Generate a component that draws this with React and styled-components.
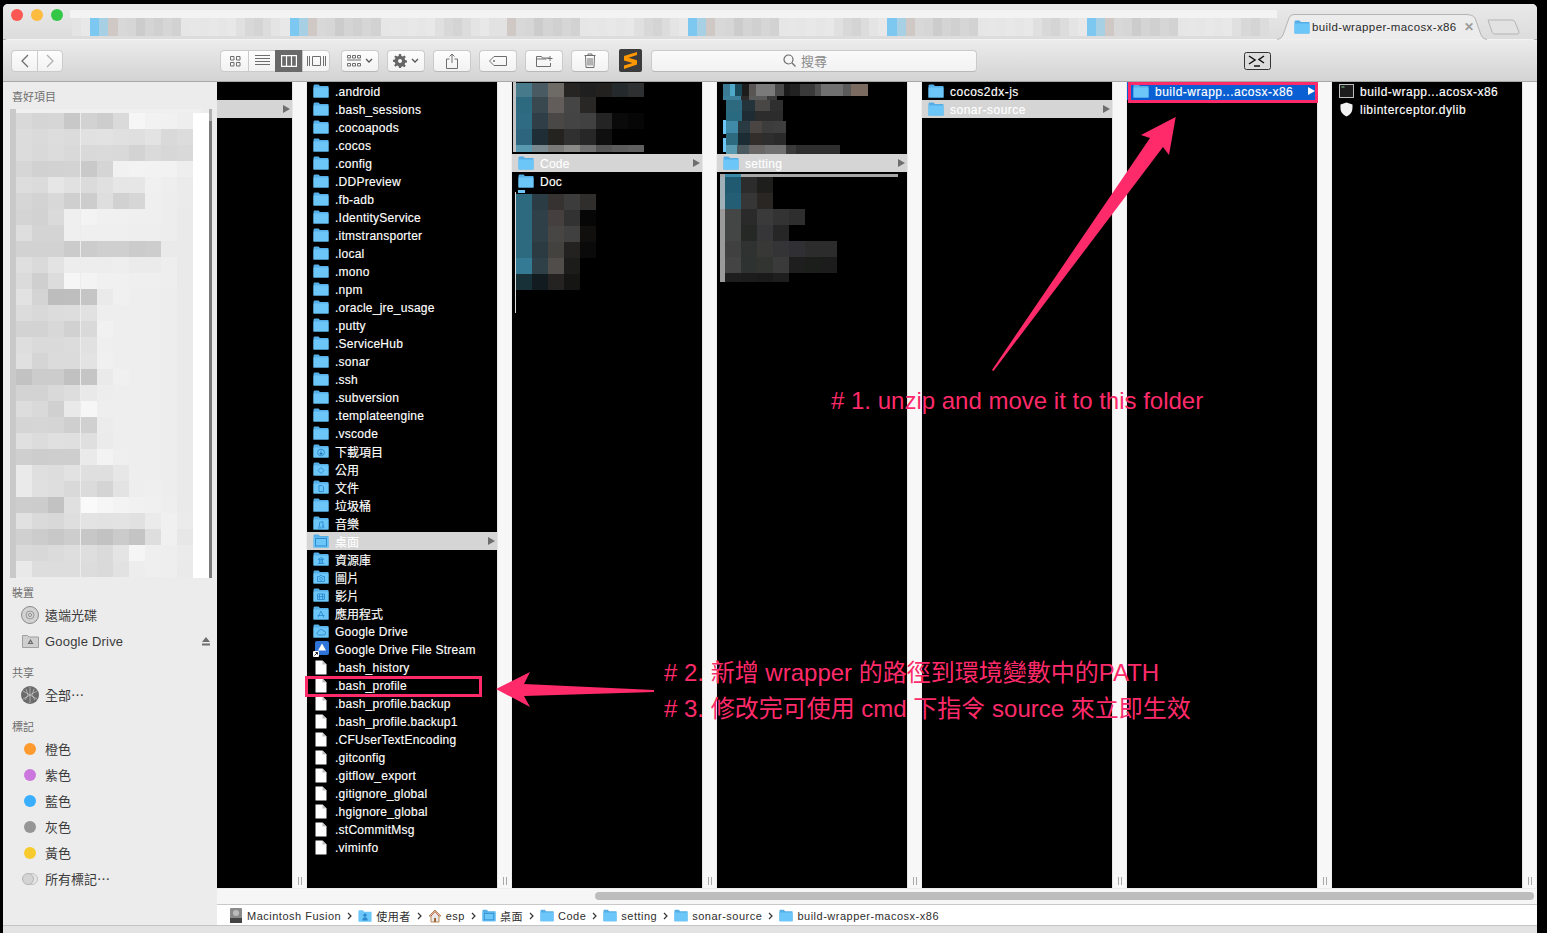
import React from 'react'
import styled, { createGlobalStyle } from 'styled-components'

const PINK = '#ff2a6a'
const SANS = `"Liberation Sans", "Noto Sans CJK TC", sans-serif`
const isCjk = s => /[\u3400-\u9fff]/.test(s)

const Global = createGlobalStyle`
  html, body { margin: 0; padding: 0; background: #000; overflow: hidden; }
  body { font-family: ${SANS}; }
`

const Page = styled.div`
  position: relative;
  width: 1547px;
  height: 933px;
  background: #000;
  padding: 4px 10px 0 3px;
  box-sizing: border-box;
  overflow: hidden;
`
const Win = styled.div`
  width: 1534px;
  height: 929px;
  display: flex;
  flex-direction: column;
  border-radius: 5px 5px 0 0;
  overflow: hidden;
  background: #ececec;
`

/* ---- tab strip ---- */
const TabBar = styled.div`
  height: 36px;
  flex: none;
  display: flex;
  box-sizing: border-box;
  border-bottom: 1px solid #a9a9a9;
  background: linear-gradient(#e9e9e9, #dcdcdc);
`
const Lights = styled.div`
  width: 67px;
  flex: none;
  display: flex;
  gap: 8px;
  padding: 5px 0 0 8px;
  box-sizing: border-box;
`
const Light = styled.span`
  width: 12px;
  height: 12px;
  border-radius: 50%;
  background: ${p => p.$c};
`
const BlurTabs = styled.div`
  width: 1207px;
  flex: none;
  margin-top: 6px;
  height: 26px;
`
const ActiveTab = styled.div`
  position: relative;
  width: 210px;
  height: 36px;
  flex: none;
  display: flex;
  align-items: center;
  padding: 10px 0 0 17px;
  box-sizing: border-box;
  font-size: 11.5px;
  letter-spacing: .38px;
  color: #2a2a2a;
  gap: 2px;
  & > span { position: relative; }
  & > svg:not(:first-child) { position: relative; }
`
const TabShape = styled.svg`
  position: absolute;
  left: 0;
  top: 0;
`
const TabClose = styled.span`
  margin-left: 5px;
  color: #9a9a9a;
  font-size: 12px;
  font-weight: bold;
`
const NewTab = styled.div`
  margin: 15px 0 0 0;
  flex: none;
  line-height: 0;
`

/* ---- toolbar ---- */
const Toolbar = styled.div`
  height: 43px;
  flex: none;
  display: flex;
  align-items: center;
  box-sizing: border-box;
  padding: 0 0 0 8px;
  background: linear-gradient(#ececec, #d3d3d3);
  border-top: 1px solid #f3f3f3;
  border-bottom: 1px solid #a8a8a8;
  border-radius: 5px 5px 0 0;
  margin-top: -1px;
`
const Btn = styled.button`
  height: 22px;
  width: ${p => p.$w || 38}px;
  margin-left: ${p => p.$ml || 0}px;
  flex: none;
  padding: 0;
  display: flex;
  align-items: center;
  justify-content: center;
  gap: 4px;
  border: 1px solid #cbcbcb;
  border-bottom-color: #b9b9b9;
  border-radius: 4px;
  background: linear-gradient(#fdfdfd, #f2f2f2);
`
const Seg = styled(Btn)`
  border-radius: ${p => p.$r || 0};
  margin-left: ${p => p.$ml ?? -1}px;
  background: ${p => p.$on ? '#696969' : 'linear-gradient(#fdfdfd, #f2f2f2)'};
  border-color: ${p => p.$on ? '#696969' : '#cbcbcb'};
`
const SublimeBox = styled.div`
  width: 23px;
  height: 23px;
  margin-left: 10px;
  flex: none;
  border-radius: 2px;
  background: #3b3b3b;
  line-height: 0;
`
const Search = styled.div`
  width: 326px;
  height: 22px;
  margin-left: 9px;
  flex: none;
  display: flex;
  align-items: center;
  justify-content: center;
  gap: 5px;
  box-sizing: border-box;
  padding-right: 18px;
  border: 1px solid #cbcbcb;
  border-bottom-color: #b9b9b9;
  border-radius: 4px;
  background: linear-gradient(#fafafa, #f2f2f2);
  font-size: 13px;
  color: #8a8a8a;
`
const TermBtn = styled.div`
  margin-left: 267px;
  width: 27px;
  height: 18px;
  flex: none;
  line-height: 0;
`

/* ---- body ---- */
const Body = styled.div`
  flex: 1;
  min-height: 0;
  display: flex;
`
const Sidebar = styled.div`
  width: 214px;
  flex: none;
  height: 844px;
  padding-top: 6px;
  box-sizing: border-box;
  background: #ececec;
`
const SideLabel = styled.div`
  height: 16px;
  line-height: 18px;
  padding-left: 9px;
  margin: ${p => p.$mt || 0}px 0 ${p => p.$mb ?? 2}px;
  font-size: 11px;
  color: #6f6f6f;
`
const SideBlur = styled.div`
  margin: 5px 0 6px 7px;
  height: 469px;
  line-height: 0;
`
const SideRow = styled.div`
  height: 26px;
  display: flex;
  align-items: center;
  padding-left: 15px;
  font-size: 13px;
  color: #3b3b3b;
`
const SideText = styled.span`
  margin-top: ${p => p.$cjk ? -2 : 0}px;
  letter-spacing: ${p => p.$cjk ? 0 : .2}px;
`
const SideIcon = styled.span`
  width: 24px;
  margin-right: 3px;
  flex: none;
  display: flex;
  justify-content: center;
`
const Dot = styled.span`
  width: 12px;
  height: 12px;
  border-radius: 50%;
  background: ${p => p.$c};
`
const Eject = styled.span`
  margin-left: auto;
  margin-right: 7px;
  line-height: 0;
`
const Main = styled.div`
  flex: 1;
  min-width: 0;
  display: flex;
  flex-direction: column;
`
const Columns = styled.div`
  height: 806px;
  flex: none;
  display: flex;
`
const Col = styled.div`
  width: ${p => p.$w || 190}px;
  flex: none;
  background: #000;
  overflow: hidden;
`
const Handle = styled.div`
  width: 15px;
  flex: none;
  box-sizing: border-box;
  background: #f7f7f7;
  border-left: 1px solid #e6e6e6;
  border-right: 1px solid #ededed;
  display: flex;
  align-items: flex-end;
  justify-content: center;
  gap: 2px;
  padding-bottom: 3px;
  & > i { width: 1px; height: 8px; background: #a8a8a8; }
`
const Row = styled.div`
  height: 18px;
  display: flex;
  align-items: center;
  gap: 6px;
  padding-left: 6px;
  padding-right: 2px;
  box-sizing: border-box;
  font-size: 12px;
  white-space: nowrap;
  color: #fff;
  background: ${p => p.$sel === 'blue' ? '#0a5fd2' : p.$sel ? '#d5d5d5' : 'transparent'};
`
const RowLabel = styled.span`
  padding-top: ${p => p.$cjk ? 0 : 2}px;
  letter-spacing: ${p => p.$cjk ? 0 : p.$wide ? .5 : .25}px;
  -webkit-text-stroke: .15px currentColor;
`
const RowIcon = styled.span`
  width: 16px;
  height: 16px;
  flex: none;
  display: flex;
  align-items: center;
  justify-content: center;
`
const RowArrow = styled.span`
  margin-left: auto;
  width: 0;
  height: 0;
  border-style: solid;
  border-width: 4px 0 4px 7px;
  border-color: transparent transparent transparent ${p => p.$c || '#6e6e6e'};
`
const BlurBlock = styled.div`
  height: ${p => p.$h}px;
  line-height: 0;
`
const Scroller = styled.div`
  height: 17px;
  flex: none;
  box-sizing: border-box;
  background: #f6f6f6;
  border-top: 1px solid #ececec;
  border-bottom: 1px solid #c9c9c9;
  padding: 3px 3px 0 378px;
  & > div { height: 8px; border-radius: 4px; background: #bdbdbd; }
`
const PathBar = styled.div`
  height: 21px;
  flex: none;
  display: flex;
  align-items: center;
  padding-left: 12px;
  background: #fff;
  font-size: 11px;
  letter-spacing: .5px;
  color: #2e2e2e;
  white-space: nowrap;
`
const Crumb = styled.span`
  display: flex;
  align-items: center;
  gap: 4px;
`
const Chev = styled.span`
  width: 17px;
  flex: none;
  display: flex;
  justify-content: center;
  line-height: 0;
`
const Status = styled.div`
  height: 8px;
  flex: none;
  box-sizing: border-box;
  background: #e3e3e3;
  border-top: 1px solid #c4c4c4;
`

/* ---- annotations over everything ---- */
const Frame = styled.div`
  position: absolute;
  left: ${p => p.$x}px;
  top: ${p => p.$y}px;
  width: ${p => p.$w}px;
  height: ${p => p.$h}px;
  box-sizing: border-box;
  border: 3px solid ${PINK};
`
const Note = styled.div`
  position: absolute;
  left: ${p => p.$x}px;
  top: ${p => p.$y}px;
  font-size: 24px;
  line-height: 30px;
  color: ${PINK};
  white-space: nowrap;
`
const ArrowLayer = styled.svg`
  position: absolute;
  left: 0;
  top: 0;
`

/* ---- drawings ---- */
const glyphs = {
  down: <><circle cx="8" cy="8.500" r="3.400" fill="none" /><path d="M8 6.500v4M6.500 9L8 10.500 9.500 9" /></>,
  pub: <path d="M8 5.500l3 3-3 3-3-3z" fill="none" />,
  doc: <path d="M6 5.500h3l1.500 1.500v4.500H6z" fill="none" />,
  music: <path d="M6.500 11V6.500l3.500-.8V10M6.500 11a1 1 0 1 1-.1 0M10 10a1 1 0 1 1-.1 0" fill="none" />,
  desk: <rect x="2.500" y="4.500" width="11" height="7.500" fill="none" strokeWidth="1" />,
  lib: <path d="M5 11.500h6M5.500 7.500h5M8 5.500L5 7.500M8 5.500l3 2M6.500 8v3M8 8v3M9.500 8v3" fill="none" />,
  cam: <path d="M4.500 6.500h2l.7-1h1.600l.7 1h2v5h-7zM8 7.500a1.400 1.400 0 1 0 .1 0" fill="none" />,
  film: <path d="M4.500 6h7v5.500h-7zM6.500 6v5.500M9.500 6v5.500M4.500 8.700h7" fill="none" />,
  apps: <path d="M8 5L5 11.500M8 5l3 6.500M4.500 9.500h7" fill="none" />,
  cloud: <path d="M5.500 11a1.800 1.800 0 0 1 0-3.500A2.600 2.600 0 0 1 10.400 7a2 2 0 0 1 .3 4z" fill="none" />,
}

const Folder = ({ glyph, w = 16, h = 14 }) => (
  <svg width={w} height={h} viewBox="0 0 16 14">
    <path d="M.5 2q0-1.500 1-1.500h4L7 2h8q.5 0 .5.5v11H.5z" fill="#55aee6" />
    <path d="M.5 3.500h15v9.500q0 .5-.5.5H1q-.5 0-.5-.5z" fill="#6cc6f8" />
    {glyph && <g stroke="#2b8bd0" strokeWidth=".9">{glyphs[glyph]}</g>}
  </svg>
)
const FileIcon = () => (
  <svg width="12" height="15" viewBox="0 0 12 15">
    <path d="M.5.500h7l4 4v10H.5z" fill="#fff" />
    <path d="M7.500.500v4h4z" fill="#bdbdbd" />
  </svg>
)
const StreamIcon = () => (
  <svg width="16" height="16" viewBox="0 0 16 16">
    <rect x="2" y="0" width="14" height="14" rx="2" fill="#2f74d8" />
    <path d="M9 2.500l4 7H5z" fill="#fff" />
    <rect x="0" y="10" width="6" height="6" rx="1" fill="#fff" />
    <path d="M1.500 14.500l3-3M2.500 11.500h2v2" stroke="#222" fill="none" />
  </svg>
)
const ExecIcon = () => (
  <svg width="15" height="14" viewBox="0 0 15 14">
    <rect x=".5" y=".5" width="14" height="13" fill="#1c1c1c" stroke="#bdbdbd" />
    <path d="M2.500 3h3" stroke="#7fd18a" />
  </svg>
)
const ShieldIcon = () => (
  <svg width="15" height="15" viewBox="0 0 15 15">
    <path d="M7.500.500l6 2q.3 6-1.500 8.500t-4.500 3.500Q5 13.500 3 11T1.500 2.500z" fill="#f2f2f2" />
  </svg>
)
const Mosaic = ({ w, h, rects }) => (
  <svg width={w} height={h} shapeRendering="crispEdges">
    {rects.map(([x, y, rw, rh, c], i) => <rect key={i} x={x} y={y} width={rw} height={rh} fill={c} />)}
  </svg>
)
const tileRows = (x0, rows, tw = 16) => {
  const out = []
  rows.forEach(([y, th, cells]) => {
    cells.forEach((c, i) => out.push([x0 + i * tw, y, tw, th, c]))
  })
  return out
}

const sideGreys = `d9d5d6c8d2cddaf6f2f1ee dcdadddbe1e2e0dfe3d9dc dcd9dcd9d9dad9d3dad7d9 d6d1d2d3c9d5f1f3f2f2ee
dddbe6e1dbe0e6e6f0eeeb d6d3d8cfcdded1d6efedeb d4d2daeff3f0f0efefedea ded4d4efefefefeeeeedea
d2d2d2cbcccfcfcbcdeaea dfdae3edededeeebebeeea dbcfdcf6f3f0f0efefeeea e2d4bdbec5eaf0eeeeedea
dcd9dcdde1eeeeeeeeedea d3d3d8d1d9f1eeeeeeedea dedadadce1efeeeeeeedea e0d5dbdbe3f0eeeeeeedea
c2ccccc1c5eaf0eeeeedea d3d3d9dde9edeeeeeeedea ddd9d0e9f6eeeeeeeeedea d5d6d5cfd0eceeeeeeedea
e0dce0dfdfebeeeeeeedea cfcdceceeaf3efeeeeedea eadfdde2dfdfe7eeeeedea eae0ded9dbd4e3eeefedea
cdccc2e0faf6f3f1f0eeea e1dad8dee3e2e3e1ebf0eb d0ccc8cdc7c2cbc4def0e7 d9d8dbdededae4f5efeeeb
e9dddddddcdae2edefeeea`.split(/\s+/)

const sideRects = [
  [0, 0, 6, 469, '#c9c9c9'],
  [6, 0, 187, 4, '#efefef'],
  [183, 4, 16, 469, '#ffffff'],
  [199, 0, 3, 469, '#7a7a7a'],
  [199, 0, 3, 12, '#b0b0b0'],
]
sideGreys.forEach((row, r) => {
  for (let i = 0; i < 11; i++) {
    const g = row.slice(i * 2, i * 2 + 2)
    sideRects.push([6 + i * 16 + (i > 3 ? 1 : 0), 4 + r * 16, 16, 16, `#${g}${g}${g}`])
  }
})

const col2Top = [
  [1, 0, 3, 70, '#c2c2c2'],
  ...tileRows(4, [
    [1, 14, ['#477a8a', '#4a5a62', '#6e6a66', '#262524', '#1f1f1f', '#23211f', '#242a2c', '#2d2f30']],
    [15, 16, ['#2d6a80', '#38484e', '#625c5a', '#454545', '#282725', '#000', '#000', '#000']],
    [31, 16, ['#2f6b82', '#2f3e47', '#4a4846', '#444', '#414141', '#242424', '#0a0a0a', '#060606']],
    [47, 16, ['#2d647e', '#1f2d36', '#252320', '#303030', '#272727', '#0f0f0f', '#000', '#000']],
    [63, 7, ['#5a9ab0', '#7a8890', '#7a7a78', '#8a8a88', '#707070', '#555', '#5c5c5c', '#606060']],
  ]),
]
const col2Bottom = [
  [3, 2, 1, 121, '#d8d8d8'],
  [6, 0, 7, 3, '#6cc6f8'],
  ...tileRows(4, [
    [4, 16, ['#2d6a80', '#2c3c44', '#363231', '#3c3c3c', '#2f2e2d']],
    [20, 16, ['#2d6a80', '#2f4048', '#45403f', '#323232', '#060606']],
    [36, 16, ['#2d6a80', '#2f4048', '#484545', '#404040', '#100f0e']],
    [52, 16, ['#2d6a80', '#2c3a42', '#44423f', '#232220', '#0a0a0a']],
    [68, 16, ['#347a94', '#2f4048', '#504d4b', '#1c1c1a', '#000']],
    [84, 16, ['#183038', '#121c20', '#252322', '#151513', '#000']],
  ]),
]
const col3Top = [
  ...[['#3b7a94', 6, 7], ['#4fa8c8', 13, 5], ['#1a4a5a', 18, 7], ['#1c1c1c', 25, 7], ['#5a5555', 32, 7], ['#7a7a7a', 39, 19],
    ['#4a4a4a', 58, 9], ['#1a1a1a', 67, 6], ['#222', 73, 10], ['#3a3a3a', 83, 15], ['#505050', 98, 6], ['#707070', 104, 22], ['#5a5a5a', 126, 8], ['#7a6a60', 134, 17]]
    .map(([c, x, w]) => [x, 2, w, 12, c]),
  [6, 14, 18, 4, '#3b7f98'], [24, 14, 8, 4, '#2a2a2a'], [32, 14, 18, 4, '#5a5a5a'], [50, 14, 10, 4, '#3a3a3a'],
  [9, 18, 16, 11, '#2d6a80'], [25, 18, 13, 11, '#24323a'], [38, 18, 15, 11, '#484745'], [53, 18, 13, 11, '#2f2f2f'],
  [6, 38, 3, 14, '#6cc6f8'], [6, 56, 3, 14, '#6cc6f8'],
  ...tileRows(9, [[39, 12, ['#3f8aa8', '#2a3a42', '#4a4543', '#3c3c3c', '#3e3e3e']]], 12),
  [9, 29, 16, 10, '#2a6a80'], [25, 29, 13, 10, '#1f2c34'], [38, 29, 28, 10, '#2c2c2c'],
  ...tileRows(9, [[51, 12, ['#2d6a80', '#1c2c34', '#332e2c', '#2e2e2e', '#2a2a2a']]], 12),
  [9, 63, 11, 9, '#5a9ab0'], [20, 63, 12, 9, '#4c5a60'], [32, 63, 16, 9, '#6a6866'], [48, 63, 21, 9, '#707070'], [69, 63, 10, 9, '#3a3a3a'], [79, 63, 44, 9, '#2e2e2e'],
]
const col3Bottom = [
  [3, 2, 178, 3, '#a6a6a6'],
  [8, 2, 16, 3, '#3a8aa8'],
  [3, 5, 5, 32, '#9fb0b8'],
  [3, 37, 5, 73, '#9a9a9a'],
  ...tileRows(8, [
    [5, 16, ['#205a70', '#2c2c2c', '#1e1e1c']],
    [21, 16, ['#235e74', '#363636', '#2a2624']],
    [37, 16, ['#444645', '#2a2a2a', '#3a3a3a', '#333', '#2e2e2e']],
    [53, 16, ['#444645', '#262826', '#363638', '#262626']],
    [69, 16, ['#404040', '#303232', '#383836', '#343436', '#303034', '#2c2c2c', '#2c2c2c']],
    [85, 16, ['#444', '#2e3230', '#323432', '#3a3a3a', '#1e1e1e', '#1c1e1c', '#1c1c1c']],
    [101, 9, ['#1e1e1e', '#1c1c1c', '#1a1a1a', '#1e1e1e']],
  ]),
]

const tabTiles = ['#e4e4e4', '#e8e8e8', '#7cc8f0', '#a8d0e4', '#d0c8c4', '#d8d8d8', '#d6d6d6', '#cccccc', '#d4d4d4', '#d0d0d0', '#d6d6d6', '#d2d2d2',
  '#e6e6e6', '#e7e7e7', '#e6e6e6', '#e8e8e8', '#e6e6e6', '#e8e8e8', '#e0e0e0', '#d8d8d8', '#d4d4d4', '#dcdcdc']
const BlurredTabs = () => (
  <svg width="1207" height="26" shapeRendering="crispEdges">
    <rect x="0" y="0" width="1207" height="8" fill="#f3f3f3" />
    {[0, 1, 2, 3, 4, 5].map(k => tabTiles.map((c, j) => {
      const x = 2 + k * 199.3 + j * 9.1
      const tinted = k === 2 && (j === 2 || j === 3) ? '#e2e2e2' : c
      return <rect key={`${k}-${j}`} x={x} y="8" width="9.200" height="18" fill={tinted} />
    }))}
  </svg>
)

const sublime = (
  <svg width="23" height="23" viewBox="0 0 23 23">
    <path d="M18 3L5 7v4.500l8.500 2.500L5 16.500V20l13-4.500v-4.300L9.500 8.700 18 6z" fill="#ff9800" />
  </svg>
)
const ic = { fill: 'none', stroke: '#6e6e6e' }

const col1 = [
  '.android', '.bash_sessions', '.cocoapods', '.cocos', '.config', '.DDPreview', '.fb-adb', '.IdentityService',
  '.itmstransporter', '.local', '.mono', '.npm', '.oracle_jre_usage', '.putty', '.ServiceHub', '.sonar', '.ssh',
  '.subversion', '.templateengine', '.vscode',
].map(name => ({ name, kind: 'folder' })).concat([
  { name: '下載項目', kind: 'folder', glyph: 'down' },
  { name: '公用', kind: 'folder', glyph: 'pub' },
  { name: '文件', kind: 'folder', glyph: 'doc' },
  { name: '垃圾桶', kind: 'folder' },
  { name: '音樂', kind: 'folder', glyph: 'music' },
  { name: '桌面', kind: 'folder', glyph: 'desk', sel: true },
  { name: '資源庫', kind: 'folder', glyph: 'lib' },
  { name: '圖片', kind: 'folder', glyph: 'cam' },
  { name: '影片', kind: 'folder', glyph: 'film' },
  { name: '應用程式', kind: 'folder', glyph: 'apps' },
  { name: 'Google Drive', kind: 'folder', glyph: 'cloud' },
  { name: 'Google Drive File Stream', kind: 'stream' },
]).concat([
  '.bash_history', '.bash_profile', '.bash_profile.backup', '.bash_profile.backup1', '.CFUserTextEncoding', '.gitconfig',
  '.gitflow_export', '.gitignore_global', '.hgignore_global', '.stCommitMsg', '.viminfo',
].map(name => ({ name, kind: 'file' })))

const Item = ({ name, kind = 'folder', glyph, sel, wide }) => (
  <Row $sel={sel}>
    <RowIcon>
      {kind === 'folder' && <Folder glyph={glyph} />}
      {kind === 'file' && <FileIcon />}
      {kind === 'stream' && <StreamIcon />}
      {kind === 'exec' && <ExecIcon />}
      {kind === 'shield' && <ShieldIcon />}
    </RowIcon>
    <RowLabel $cjk={isCjk(name)} $wide={wide}>{name}</RowLabel>
    {sel && <RowArrow $c={sel === 'blue' ? '#fff' : undefined} />}
  </Row>
)
const Grip = () => <Handle><i /><i /></Handle>

const tags = [['橙色', '#ff9a2e'], ['紫色', '#cc77dd'], ['藍色', '#3aaeff'], ['灰色', '#969696'], ['黃色', '#f7cb2e']]

const crumbs = [
  ['Macintosh Fusion', <svg width="14" height="15" viewBox="0 0 14 15"><rect x="1" y="0" width="12" height="15" rx="1" fill="#8a8a8a" /><rect x="1" y="10" width="12" height="5" fill="#444" /><circle cx="7" cy="5" r="3" fill="#bbb" /></svg>],
  ['使用者', <svg width="14" height="14" viewBox="0 0 16 14"><path d="M.5 2q0-1.500 1-1.500h4L7 2h8.500v11.500H.5z" fill="#6cc6f8" /><path d="M8 4a2 2 0 1 1-.1 0M5 12q0-3.500 3-3.500t3 3.500z" fill="#2b8bd0" /></svg>],
  ['esp', <svg width="14" height="14" viewBox="0 0 14 14"><path d="M7 1L1 7h2v6h8V7h2z" fill="#e8e8e8" stroke="#b98a5a" /><path d="M3 7L7 2.500 11 7" fill="none" stroke="#c2552d" /><rect x="6" y="9" width="2" height="4" fill="#a0683a" /></svg>],
  ['桌面', <Folder w={14} h={13} glyph="desk" />],
  ['Code', <Folder w={14} h={13} />],
  ['setting', <Folder w={14} h={13} />],
  ['sonar-source', <Folder w={14} h={13} />],
  ['build-wrapper-macosx-x86', <Folder w={14} h={13} />],
]

const SideName = ({ children }) => <SideText $cjk={isCjk(children)}>{children}</SideText>

export default function App() {
  return (
    <Page>
      <Global />
      <Win>
        <TabBar>
          <Lights>
            <Light $c="#fc5753" />
            <Light $c="#fdbc40" />
            <Light $c="#33c748" />
          </Lights>
          <BlurTabs><BlurredTabs /></BlurTabs>
          <ActiveTab>
            <TabShape width="210" height="36" viewBox="0 0 210 36">
              <path d="M0 35.500Q4 35.500 6 31L12 14Q13 10.500 17 10.500H190Q196 10.500 198 14L204 31Q206 35.500 210 35.500" fill="#ececec" stroke="#b4b4b4" />
            </TabShape>
            <Folder />
            <span>build-wrapper-macosx-x86</span>
            <TabClose>✕</TabClose>
          </ActiveTab>
          <NewTab>
            <svg width="33" height="16" viewBox="0 0 33 16">
              <path d="M1 1H25Q27 1 28 3L32 13Q32.500 15 30 15H8Q6 15 5 13z" fill="#e2e2e2" stroke="#b4b4b4" />
            </svg>
          </NewTab>
        </TabBar>

        <Toolbar>
          <Seg $w={27} $ml={0} $r="4px 0 0 4px">
            <svg width="10" height="14" {...ic} strokeWidth="1.300"><path d="M8 1L2 7l6 6" /></svg>
          </Seg>
          <Seg $w={26} $r="0 4px 4px 0">
            <svg width="10" height="14" fill="none" stroke="#b0b0b0" strokeWidth="1.300"><path d="M2 1l6 6-6 6" /></svg>
          </Seg>
          <Seg $w={29} $ml={157} $r="4px 0 0 4px">
            <svg width="12" height="12" {...ic}><path d="M1.500 1.500h3.500v3.500H1.500zM7.500 1.500H11v3.500H7.500zM1.500 7.500h3.500V11H1.500zM7.500 7.500H11V11H7.500z" /></svg>
          </Seg>
          <Seg $w={28}>
            <svg width="15" height="11" {...ic}><path d="M0 .500h15M0 3.500h15M0 6.500h15M0 9.500h15" /></svg>
          </Seg>
          <Seg $w={28} $on>
            <svg width="16" height="12" fill="none" stroke="#fff" strokeWidth="1.200"><path d="M.6.600h14.800v10.800H.6zM5.500.6v10.800M10.500.6v10.800" /></svg>
          </Seg>
          <Seg $w={28} $r="0 4px 4px 0">
            <svg width="19" height="12" {...ic}><path d="M5.500 1.500h8v9h-8zM.5 1v10M2.500 1v10M16.500 1v10M18.500 1v10" /></svg>
          </Seg>
          <Btn $ml={11}>
            <svg width="14" height="12" {...ic}><path d="M.5.500h3v2.500h-3zM5.500.500h3v2.500h-3zM10.500.500h3v2.500h-3zM0 5h14M.5 8.500h3V11h-3zM5.500 8.500h3V11h-3zM10.500 8.500h3V11h-3z" /></svg>
            <svg width="8" height="6" fill="none" stroke="#555" strokeWidth="1.300"><path d="M1 1l3 3 3-3" /></svg>
          </Btn>
          <Btn $ml={8}>
            <svg width="14" height="14" viewBox="0 0 14 14"><path fill="#666" fillRule="evenodd" d="M6 0h2l.4 2 1.400.6L11.500 1.500 12.800 3l-1.200 1.600.6 1.400 1.800.4v2l-1.800.4-.6 1.400 1.200 1.600-1.300 1.500-1.700-1.100-1.400.6L8 14H6l-.4-1.800-1.400-.6-1.700 1.100L1.200 11.200l1.200-1.600L1.800 8.200 0 7.800v-2l1.800-.4.6-1.400L1.200 3 2.500 1.500l1.700 1.100L5.600 2zM7 5a2 2 0 1 0 .1 0z" /></svg>
            <svg width="8" height="6" fill="none" stroke="#555" strokeWidth="1.300"><path d="M1 1l3 3 3-3" /></svg>
          </Btn>
          <Btn $ml={8}>
            <svg width="12" height="16" {...ic}><path d="M6 10V1M3.500 3.500L6 1l2.500 2.500M3.500 6H.5v9.500h11V6h-3" /></svg>
          </Btn>
          <Btn $ml={8}>
            <svg width="18" height="10" {...ic}><path d="M17.500.5H5L.5 5 5 9.500h12.500zM4.500 4.500h1v1h-1z" /></svg>
          </Btn>
          <Btn $ml={8}>
            <svg width="17" height="12" {...ic}><path d="M.5 1.500h5l1 1.500h7M.5 1.500v10h14V8M.5 4h10M14 1v5M11.500 3.500h5" /></svg>
          </Btn>
          <Btn $ml={8}>
            <svg width="12" height="15" {...ic}><path d="M.5 2.500h11M4 2.500V1h4v1.500M1.500 2.500l.5 12h8l.5-12M4 5v7.500M6 5v7.500M8 5v7.500" /></svg>
          </Btn>
          <SublimeBox>{sublime}</SublimeBox>
          <Search>
            <svg width="13" height="13" fill="none" stroke="#6a6a6a" strokeWidth="1.200"><circle cx="5.500" cy="5.500" r="4.500" /><path d="M9 9l3.500 3.500" /></svg>
            <span>搜尋</span>
          </Search>
          <TermBtn>
            <svg width="27" height="18" viewBox="0 0 27 18">
              <rect x=".5" y=".5" width="26" height="17" rx="2" fill="#dcdcdc" stroke="#333" />
              <path d="M5 4l6 4-6 4M20 4l-5 3.500 5 3.500M10 14h6" fill="none" stroke="#111" strokeWidth="1.500" />
            </svg>
          </TermBtn>
        </Toolbar>

        <Body>
          <Sidebar>
            <SideLabel $mb={0}>喜好項目</SideLabel>
            <SideBlur><Mosaic w={202} h={469} rects={sideRects} /></SideBlur>
            <SideLabel>裝置</SideLabel>
            <SideRow>
              <SideIcon>
                <svg width="18" height="18" viewBox="0 0 18 18"><circle cx="9" cy="9" r="8.500" fill="#d2d2d2" stroke="#8a8a8a" /><circle cx="9" cy="9" r="4" fill="none" stroke="#9a9a9a" /><circle cx="9" cy="9" r="1.500" fill="#ececec" stroke="#8a8a8a" /></svg>
              </SideIcon>
              <SideName>遠端光碟</SideName>
            </SideRow>
            <SideRow>
              <SideIcon>
                <svg width="17" height="14" viewBox="0 0 17 14"><path d="M.5 1.500h5L7 3h9.500v10.500H.5z" fill="#cfcfcf" stroke="#a0a0a0" /><path d="M8.500 5l3 5h-6zM8.500 7.500L7.500 9h2z" fill="#6c6c6c" fillRule="evenodd" /></svg>
              </SideIcon>
              <SideName>Google Drive</SideName>
              <Eject>
                <svg width="8" height="9"><path d="M4 0l4 5H0z M0 6.500h8V8.500H0z" fill="#6e6e6e" /></svg>
              </Eject>
            </SideRow>
            <SideLabel $mt={10}>共享</SideLabel>
            <SideRow>
              <SideIcon>
                <svg width="18" height="18" viewBox="0 0 18 18"><circle cx="9" cy="9" r="9" fill="#6b6b6b" /><path d="M9 1v16M2 5l14 8M16 5L2 13M5 3l2 6-3 5M13 3l-2 6 3 5" stroke="#d8d8d8" strokeWidth=".6" fill="none" /></svg>
              </SideIcon>
              <SideName>全部⋯</SideName>
            </SideRow>
            <SideLabel $mt={10}>標記</SideLabel>
            {tags.map(([name, c]) => (
              <SideRow key={name}>
                <SideIcon><Dot $c={c} /></SideIcon>
                <SideName>{name}</SideName>
              </SideRow>
            ))}
            <SideRow>
              <SideIcon>
                <svg width="16" height="12" viewBox="0 0 16 12"><circle cx="10" cy="6" r="5.500" fill="#e6e6e6" stroke="#c0c0c0" /><circle cx="6" cy="6" r="5.500" fill="#d4d4d4" stroke="#b4b4b4" /></svg>
              </SideIcon>
              <SideName>所有標記⋯</SideName>
            </SideRow>
          </Sidebar>

          <Main>
            <Columns>
              <Col $w={75}>
                <Row />
                <Row $sel><RowArrow /></Row>
              </Col>
              <Grip />
              <Col>
                {col1.map(it => <Item key={it.name} {...it} />)}
              </Col>
              <Grip />
              <Col>
                <BlurBlock $h={72}><Mosaic w={190} h={72} rects={col2Top} /></BlurBlock>
                <Item name="Code" sel />
                <Item name="Doc" />
                <BlurBlock $h={130}><Mosaic w={190} h={130} rects={col2Bottom} /></BlurBlock>
              </Col>
              <Grip />
              <Col>
                <BlurBlock $h={72}><Mosaic w={190} h={72} rects={col3Top} /></BlurBlock>
                <Item name="setting" sel />
                <BlurBlock $h={120}><Mosaic w={190} h={120} rects={col3Bottom} /></BlurBlock>
              </Col>
              <Grip />
              <Col>
                <Item name="cocos2dx-js" wide />
                <Item name="sonar-source" wide sel />
              </Col>
              <Grip />
              <Col>
                <Item name="build-wrapp...acosx-x86" wide sel="blue" />
              </Col>
              <Grip />
              <Col>
                <Item name="build-wrapp...acosx-x86" wide kind="exec" />
                <Item name="libinterceptor.dylib" wide kind="shield" />
              </Col>
              <Grip />
            </Columns>
            <Scroller><div /></Scroller>
            <PathBar>
              {crumbs.map(([name, icon], i) => (
                <React.Fragment key={name}>
                  <Crumb>{icon}<span>{name}</span></Crumb>
                  {i < crumbs.length - 1 && (
                    <Chev>
                      <svg width="5" height="8" fill="none" stroke="#333" strokeWidth="1.200"><path d="M1 1l3 3-3 3" /></svg>
                    </Chev>
                  )}
                </React.Fragment>
              ))}
            </PathBar>
          </Main>
        </Body>
        <Status />
      </Win>

      <Frame $x={305} $y={676} $w={177} $h={21} />
      <Frame $x={1128} $y={82} $w={190} $h={21} />
      <ArrowLayer width="1547" height="933">
        <path d="M992 370L1150 138 1141 135 1175.700 117 1169 155 1163 147 993.500 371z" fill={PINK} />
        <path d="M496 689L530 672 524 684 654 690 654 692 524 696 530 707z" fill={PINK} />
      </ArrowLayer>
      <Note $x={831} $y={386}># 1. unzip and move it to this folder</Note>
      <Note $x={664} $y={658}># 2. 新增 wrapper 的路徑到環境變數中的PATH</Note>
      <Note $x={664} $y={694}># 3. 修改完可使用 cmd 下指令 source 來立即生效</Note>
    </Page>
  )
}
